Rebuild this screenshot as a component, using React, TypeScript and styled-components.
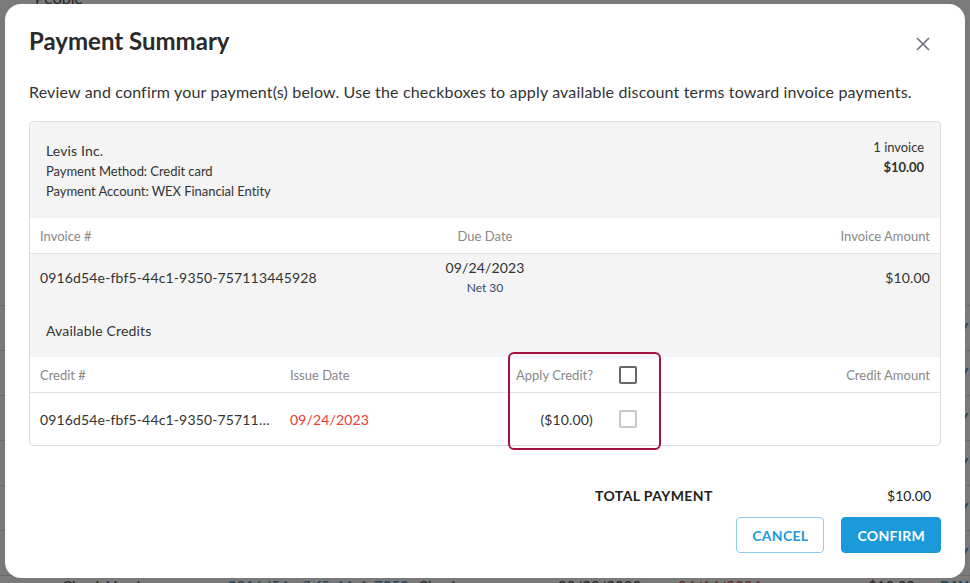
import styled, { createGlobalStyle } from 'styled-components';

const GlobalStyle = createGlobalStyle`
  html, body {
    margin: 0;
    padding: 0;
    height: 100%;
  }
  body {
    font-family: Lato, "Open Sans", "Liberation Sans", sans-serif;
    color: #333;
    background: #fff;
    overflow: hidden;
  }
  * { box-sizing: border-box; }
`;

/* page behind the dialog */
const Page = styled.div`
  width: 970px;
  height: 583px;
  display: flex;
  flex-direction: column;
`;

const PageTop = styled.div`
  margin-top: -12px;
  height: 20px;
  padding-left: 35px;
  font-size: 16px;
  line-height: 20px;
  color: #222;
`;

const PageRows = styled.div`
  margin-top: 297px;
  display: flex;
  flex-direction: column;
`;

const PageRow = styled.div<{ $tight?: boolean }>`
  display: grid;
  grid-template-columns: 62px 166px 190px 140px 120px 190px 72px 1fr;
  height: ${(p) => (p.$tight ? 30 : 45)}px;
  align-items: ${(p) => (p.$tight ? 'start' : 'center')};
  padding-top: ${(p) => (p.$tight ? 1 : 0)}px;
  border-top: 1px solid #d8d8d8;
  font-size: 15px;
  line-height: 18px;
  color: #222;
  white-space: nowrap;
  & > span:first-child { grid-column: 2; }
`;

const PageLink = styled.span`
  color: #1a6fa8;
  text-decoration: underline;
`;

const PageRed = styled.span`
  color: #c0392b;
`;

const PageAction = styled.span`
  color: #1a6fa8;
  font-weight: 700;
  letter-spacing: 0.5px;
`;

const Overlay = styled.div`
  position: fixed;
  inset: 0;
  background: rgba(40, 40, 40, 0.62);
  display: flex;
  align-items: flex-start;
  justify-content: center;
`;

const Modal = styled.div`
  margin-top: 4px;
  width: 960px;
  height: 574px;
  background: #fff;
  border-radius: 16px;
  padding: 21px 24px 25px;
  display: flex;
  flex-direction: column;
`;

const Header = styled.div`
  display: flex;
  align-items: center;
  justify-content: space-between;
`;

const Title = styled.h2`
  margin: 0;
  font-size: 24px;
  line-height: 32px;
  font-weight: 700;
  color: #2a2a2a;
`;

const CloseButton = styled.button`
  border: 0;
  background: none;
  padding: 0;
  margin: 6px 6px 0 0;
  width: 24px;
  height: 24px;
  display: flex;
  align-items: center;
  justify-content: center;
  cursor: pointer;
`;

const Intro = styled.p`
  margin: 23px 0 0;
  font-size: 16px;
  line-height: 24px;
  letter-spacing: 0.16px;
  color: #333;
`;

const Card = styled.div`
  margin-top: 17px;
  border: 1px solid #dcdcdc;
  border-radius: 4px;
`;

const Summary = styled.div`
  background: #f4f4f4;
  display: flex;
  justify-content: space-between;
  padding: 15px 16px 17px;
  border-radius: 4px 4px 0 0;
`;

const Payee = styled.div`
  padding-top: 4px;
`;

const Line = styled.div<{ $size?: number; $bold?: boolean }>`
  font-size: ${(p) => p.$size ?? 13}px;
  line-height: 20px;
  letter-spacing: ${(p) => (p.$size === 14 ? 0.15 : -0.05)}px;
  font-weight: ${(p) => (p.$bold ? 700 : 400)};
  color: #333;
`;

const Totals = styled.div`
  text-align: right;
`;

const HeadRow = styled.div<{ $cols: string }>`
  display: grid;
  grid-template-columns: ${(p) => p.$cols};
  align-items: center;
  height: 36px;
  padding: 0 10px;
  background: #fff;
  border-bottom: 1px solid #e2e2e2;
  font-size: 13px;
  color: #888;
`;

const Cell = styled.div<{ $align?: string }>`
  text-align: ${(p) => p.$align ?? 'left'};
  white-space: nowrap;
  overflow: hidden;
  text-overflow: ellipsis;
`;

const InvoiceRow = styled.div`
  display: grid;
  grid-template-columns: 1fr 1fr 1fr;
  align-items: center;
  padding: 4px 10px;
  background: #f4f4f4;
  font-size: 14px;
  line-height: 20px;
  letter-spacing: 0.15px;
  color: #333;
`;

const DueTerm = styled.div`
  font-size: 12px;
  letter-spacing: 0;
  color: #2c4a6e;
`;

const CreditsTitle = styled.div`
  background: #f4f4f4;
  padding: 19px 16px 16px;
  font-size: 14px;
  line-height: 20px;
  letter-spacing: 0.18px;
  color: #333;
`;

const CreditTable = styled.div`
  position: relative;
`;

const CreditRow = styled.div`
  display: grid;
  grid-template-columns: 250px 210px 150px 1fr;
  align-items: center;
  height: 52px;
  padding: 0 10px;
  font-size: 14px;
  letter-spacing: 0.15px;
  color: #333;
`;

const ApplyCell = styled.div`
  display: flex;
  align-items: center;
  justify-content: flex-end;
  gap: 26px;
  padding-right: 13px;
`;

const Box = styled.span<{ $dark?: boolean }>`
  display: inline-block;
  flex: none;
  width: 18px;
  height: 18px;
  border: 2px solid ${(p) => (p.$dark ? '#666' : '#c8c8c8')};
  border-radius: 2px;
  background: #fff;
`;

const CreditId = styled(Cell)`
  padding-right: 18px;
`;

const RedDate = styled(Cell)`
  color: #f03a3a;
`;

const Highlight = styled.div`
  position: absolute;
  left: 478px;
  top: -5px;
  width: 153px;
  height: 98px;
  border: 2px solid #a3133f;
  border-radius: 6px;
  pointer-events: none;
`;

const Footer = styled.div`
  margin-top: auto;
  display: flex;
  flex-direction: column;
  align-items: flex-end;
  gap: 11px;
`;

const TotalRow = styled.div`
  width: 346px;
  padding-right: 10px;
  display: flex;
  justify-content: space-between;
  font-size: 14px;
  line-height: 20px;
  color: #222;
`;

const TotalLabel = styled.span`
  font-weight: 700;
  letter-spacing: 0.4px;
`;

const Actions = styled.div`
  display: flex;
  gap: 17px;
`;

const Button = styled.button<{ $primary?: boolean }>`
  height: 36px;
  padding: 0 15px;
  border-radius: 4px;
  border: 1px solid ${(p) => (p.$primary ? '#1a9ad9' : '#8fcdee')};
  background: ${(p) => (p.$primary ? '#1a9ad9' : '#fff')};
  color: ${(p) => (p.$primary ? '#fff' : '#1a9ad9')};
  font-family: inherit;
  font-size: 14px;
  font-weight: 700;
  letter-spacing: 0.3px;
  text-transform: uppercase;
  cursor: pointer;
`;

const bgRows = [0, 1, 2, 3, 4, 5];

const App = () => {
  return (
    <>
      <GlobalStyle />
      <Page>
        <PageTop>People</PageTop>
        <PageRows>
          {bgRows.map((i) => (
            <PageRow key={i}>
              <span>Check Vendor</span>
              <PageLink>0916d54e-fbf5-44c1-7050</PageLink>
              <span>Check</span>
              <span>09/09/2023</span>
              <PageRed>04/14/2024</PageRed>
              <span>$10.00</span>
              <PageAction>PAY</PageAction>
            </PageRow>
          ))}
          <PageRow $tight>
            <span>Check Vendor</span>
            <PageLink>0916d54e-fbf5-44c1-7050</PageLink>
            <span>Check</span>
            <span>09/09/2023</span>
            <PageRed>04/14/2024</PageRed>
            <span>$10.00</span>
            <PageAction>PAY</PageAction>
          </PageRow>
        </PageRows>
      </Page>
      <Overlay>
        <Modal>
          <Header>
            <Title>Payment Summary</Title>
            <CloseButton aria-label="Close">
              <svg width="16" height="16" viewBox="0 0 16 16">
                <path d="M2 2 L14 14 M14 2 L2 14" stroke="#6b7079" strokeWidth="1.6" fill="none" />
              </svg>
            </CloseButton>
          </Header>
          <Intro>
            Review and confirm your payment(s) below. Use the checkboxes to apply available discount terms toward invoice payments.
          </Intro>

          <Card>
            <Summary>
              <Payee>
                <Line $size={14}>Levis Inc.</Line>
                <Line>Payment Method: Credit card</Line>
                <Line>Payment Account: WEX Financial Entity</Line>
              </Payee>
              <Totals>
                <Line>1 invoice</Line>
                <Line $bold>$10.00</Line>
              </Totals>
            </Summary>

            <HeadRow $cols="1fr 1fr 1fr">
              <Cell>Invoice #</Cell>
              <Cell $align="center">Due Date</Cell>
              <Cell $align="right">Invoice Amount</Cell>
            </HeadRow>
            <InvoiceRow>
              <Cell>0916d54e-fbf5-44c1-9350-757113445928</Cell>
              <Cell $align="center">
                <div>09/24/2023</div>
                <DueTerm>Net 30</DueTerm>
              </Cell>
              <Cell $align="right">$10.00</Cell>
            </InvoiceRow>

            <CreditsTitle>Available Credits</CreditsTitle>

            <CreditTable>
              <HeadRow $cols="250px 210px 150px 1fr">
                <Cell>Credit #</Cell>
                <Cell>Issue Date</Cell>
                <ApplyCell>
                  <span>Apply Credit?</span>
                  <Box $dark />
                </ApplyCell>
                <Cell $align="right">Credit Amount</Cell>
              </HeadRow>
              <CreditRow>
                <CreditId>0916d54e-fbf5-44c1-9350-757113445928</CreditId>
                <RedDate>09/24/2023</RedDate>
                <ApplyCell>
                  <span>($10.00)</span>
                  <Box />
                </ApplyCell>
                <Cell />
              </CreditRow>
              <Highlight />
            </CreditTable>
          </Card>

          <Footer>
            <TotalRow>
              <TotalLabel>TOTAL PAYMENT</TotalLabel>
              <span>$10.00</span>
            </TotalRow>
            <Actions>
              <Button>Cancel</Button>
              <Button $primary>Confirm</Button>
            </Actions>
          </Footer>
        </Modal>
      </Overlay>
    </>
  );
};

export default App;
